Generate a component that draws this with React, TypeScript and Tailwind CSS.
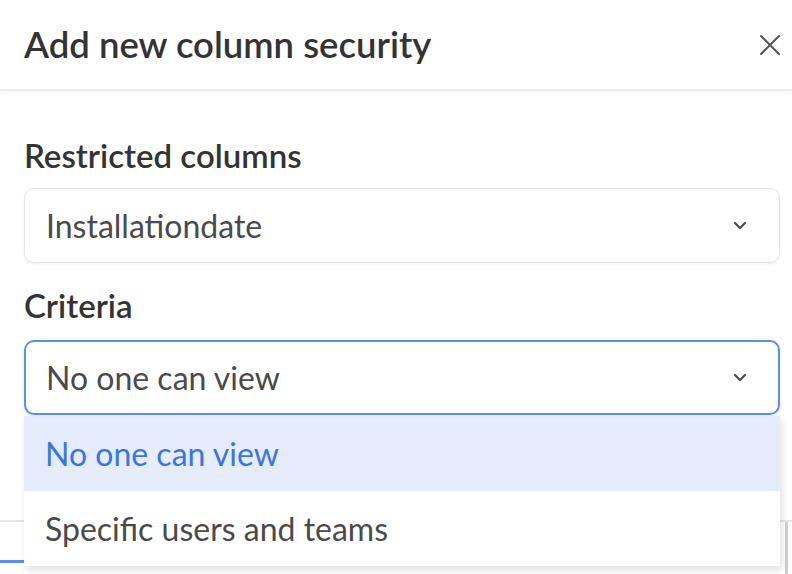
function Chevron() {
    return (
        <svg width="14" height="9" viewBox="0 0 14 9" fill="none" className="shrink-0">
            <path d="M2 2l5 5 5-5" stroke="#4a4a4a" strokeWidth="2.2" strokeLinecap="round" strokeLinejoin="round" />
        </svg>
    );
}

function CloseIcon() {
    return (
        <svg width="22" height="22" viewBox="0 0 22 22" fill="none">
            <path d="M2 2l18 18M20 2L2 20" stroke="#555" strokeWidth="2" strokeLinecap="round" />
        </svg>
    );
}

function SelectBox({ value, focused }: { value: string; focused?: boolean }) {
    return (
        <div
            className={
                focused
                    ? 'h-[75px] rounded-[10px] border-2 border-[#5a8ef0] bg-white flex items-center justify-between pl-[20px] pr-[31px] shadow-[0_2px_4px_rgba(0,0,0,0.08)]'
                    : 'h-[75px] rounded-[10px] border border-[#e4e4e4] bg-white flex items-center justify-between pl-[21px] pr-[32px] shadow-[0_1px_3px_rgba(0,0,0,0.06)]'
            }
        >
            <span className="text-[32px] text-[#4a4a4a]">{value}</span>
            <Chevron />
        </div>
    );
}

export default function App() {
    return (
        <div
            className="w-[792px] h-[574px] bg-white overflow-hidden flex flex-col"
            style={{ fontFamily: "Lato, 'Noto Sans', sans-serif" }}
        >
            <div className="h-[91px] shrink-0 flex items-center justify-between pl-6 pr-[11px] border-b-2 border-[#ececec] shadow-[0_2px_4px_rgba(0,0,0,0.04)]">
                <h1 className="text-[36.5px] font-semibold text-[#333] leading-none">Add new column security</h1>
                <CloseIcon />
            </div>

            <div className="flex-1 flex flex-col pl-6 pr-3 pt-[46px]">
                <div className="text-[33px] font-semibold text-[#333] leading-[36px]">Restricted columns</div>
                <div className="mt-[15px]">
                    <SelectBox value="Installationdate" />
                </div>
                <div className="mt-[24px] text-[33px] font-semibold text-[#333] leading-[36px]">Criteria</div>
                <div className="mt-[17px] relative">
                    <SelectBox value="No one can view" focused />
                    <div className="absolute left-0 right-0 top-[76px] z-10 bg-white shadow-[2px_4px_8px_rgba(0,0,0,0.12)]">
                        <div className="h-[75px] bg-[#e5ecfb] flex items-center pl-[21px] text-[32px] text-[#3c74e6]">
                            No one can view
                        </div>
                        <div className="h-[75px] flex items-center pl-[21px] text-[32px] text-[#4a4a4a]">
                            Specific users and teams
                        </div>
                    </div>
                </div>
            </div>

            <div className="h-[54px] shrink-0 border-t-2 border-[#e6e6e6] flex justify-between pr-[4px]">
                <div className="w-[40px] mt-[38px] h-[3px] bg-[#5a8ef0]" />
                <div className="w-[3px] bg-[#d0d0d0]" />
            </div>
        </div>
    );
}
